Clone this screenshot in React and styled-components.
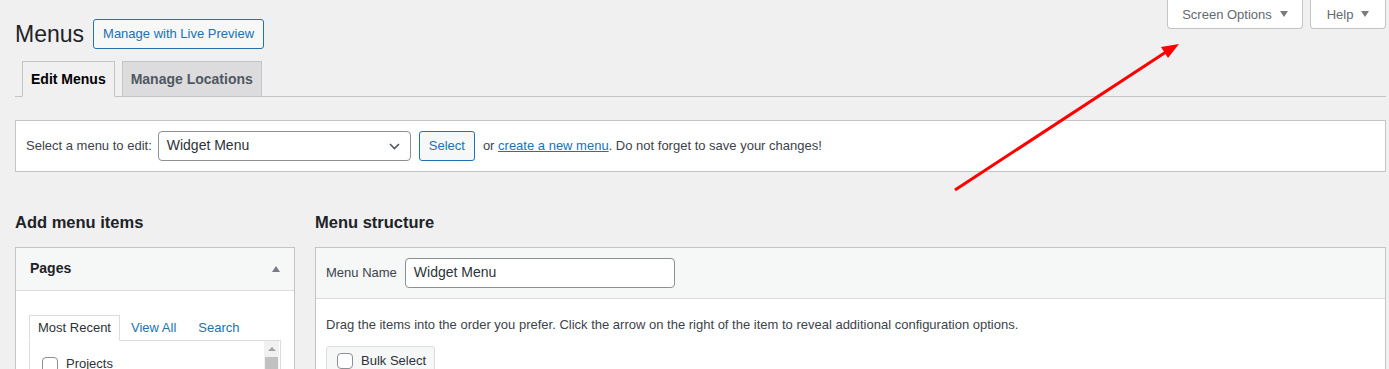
import React from 'react';
import styled, { createGlobalStyle } from 'styled-components';

const GlobalStyle = createGlobalStyle`
  html, body {
    margin: 0;
    padding: 0;
    background: #f0f0f1;
  }
  body {
    font-family: "Liberation Sans", Arial, sans-serif;
    font-size: 13px;
    line-height: 1.4;
    color: #3c434a;
  }
  * {
    box-sizing: border-box;
  }
`;

const Page = styled.div`
  position: relative;
  width: 1389px;
  height: 369px;
  overflow: hidden;
  padding: 0 3px 0 15px;
`;

const HeaderRow = styled.div`
  display: flex;
  justify-content: space-between;
  align-items: flex-start;
`;

const TitleGroup = styled.div`
  display: flex;
  align-items: center;
  gap: 9px;
  padding-top: 19px;
`;

const Title = styled.h1`
  margin: 0;
  font-size: 23px;
  font-weight: 400;
  line-height: 30px;
  color: #1d2327;
`;

const OutlineButton = styled.button`
  height: 30px;
  padding: 0 9px;
  border: 1px solid #2271b1;
  border-radius: 3px;
  background: #f6f7f7;
  color: #2271b1;
  font-family: inherit;
  font-size: 13px;
  line-height: 28px;
  white-space: nowrap;
  cursor: pointer;
`;

const MetaLinks = styled.div`
  display: flex;
  gap: 7px;
`;

const MetaTab = styled.button`
  display: flex;
  align-items: center;
  justify-content: center;
  gap: 8px;
  width: ${(p) => p.$width}px;
  height: 29px;
  padding: 0;
  border: 1px solid #c3c4c7;
  border-top: none;
  border-radius: 0 0 4px 4px;
  background: #fff;
  color: #646970;
  font-family: inherit;
  font-size: 13px;
  white-space: nowrap;
  cursor: pointer;
`;

const Caret = styled.span`
  width: 0;
  height: 0;
  border-left: 4px solid transparent;
  border-right: 4px solid transparent;
  border-top: ${(p) => (p.$up ? 'none' : '6px solid #787c82')};
  border-bottom: ${(p) => (p.$up ? '6px solid #787c82' : 'none')};
`;

const TabBar = styled.nav`
  display: flex;
  gap: 7px;
  margin-top: 12px;
  padding-left: 7px;
  border-bottom: 1px solid #c3c4c7;
`;

const NavTab = styled.a`
  display: block;
  height: 36px;
  margin-bottom: -1px;
  padding: 0 8px;
  border: 1px solid #c3c4c7;
  border-bottom-color: ${(p) => (p.$active ? '#f0f0f1' : '#c3c4c7')};
  background: ${(p) => (p.$active ? '#f0f0f1' : '#dcdcde')};
  color: ${(p) => (p.$active ? '#000' : '#50575e')};
  font-size: 14px;
  font-weight: 600;
  line-height: 34px;
  text-decoration: none;
  white-space: nowrap;
`;

const ManageBox = styled.div`
  display: flex;
  align-items: center;
  margin-top: 23px;
  padding: 10px;
  background: #fff;
  border: 1px solid #c3c4c7;
`;

const Label = styled.label`
  color: #3c434a;
  margin-right: ${(p) => p.$gap || 6}px;
  white-space: nowrap;
`;

const SelectBox = styled.div`
  display: flex;
  align-items: center;
  justify-content: space-between;
  width: 253px;
  height: 30px;
  padding: 0 10px 0 8px;
  border: 1px solid #8c8f94;
  border-radius: 4px;
  background: #fff;
  color: #2c3338;
  font-size: 14px;
  margin-right: 8px;
`;

const SecondaryButton = styled(OutlineButton)`
  margin-right: 8px;
`;

const Link = styled.a`
  color: #2271b1;
  text-decoration: underline;
`;

const Columns = styled.div`
  display: grid;
  grid-template-columns: 280px 1fr;
  column-gap: 20px;
`;

const SectionTitle = styled.h2`
  margin: 39px 0 14px;
  font-size: 16.5px;
  font-weight: 600;
  line-height: 22px;
  color: #1d2327;
`;

const Box = styled.div`
  background: #fff;
  border: 1px solid #c3c4c7;
`;

const BoxHeader = styled.div`
  display: flex;
  align-items: center;
  justify-content: space-between;
  height: ${(p) => p.$height}px;
  padding: 0 14px 0 ${(p) => p.$pl || 14}px;
  background: #f6f7f7;
  border-bottom: 1px solid #dcdcde;
`;

const BoxTitle = styled.h3`
  margin: 0;
  font-size: 14px;
  font-weight: 600;
  color: #1d2327;
`;

const BoxBody = styled.div`
  padding: ${(p) => p.$pad};
`;

const FieldRow = styled.div`
  display: flex;
  align-items: center;
`;

const InnerTabs = styled.ul`
  display: flex;
  align-items: flex-end;
  list-style: none;
  margin: 0;
  padding: 0;
`;

const InnerTab = styled.li`
  height: 26px;
  padding: 0 ${(p) => (p.$active ? 8 : 6)}px;
  margin-right: ${(p) => (p.$active ? 4 : 8)}px;
  margin-bottom: -1px;
  border: 1px solid ${(p) => (p.$active ? '#dcdcde' : 'transparent')};
  border-bottom-color: ${(p) => (p.$active ? '#fff' : 'transparent')};
  background: ${(p) => (p.$active ? '#fff' : 'transparent')};
  color: ${(p) => (p.$active ? '#2c3338' : '#2271b1')};
  line-height: 24px;
`;

const TabPanel = styled.div`
  display: flex;
  justify-content: space-between;
  height: 60px;
  border: 1px solid #dcdcde;
  background: #fff;
`;

const CheckRow = styled.label`
  display: flex;
  align-items: center;
  gap: 8px;
  height: 30px;
  padding: 17px 0 0 12px;
  color: #2c3338;
`;

const Checkbox = styled.span`
  display: inline-block;
  flex: none;
  width: 16px;
  height: 16px;
  border: 1px solid #8c8f94;
  border-radius: 4px;
  background: #fff;
`;

const Scrollbar = styled.div`
  display: flex;
  flex-direction: column;
  align-items: center;
  width: 15px;
  margin-right: 1px;
  background: #f1f1f1;
`;

const ScrollArrow = styled.span`
  margin: 6px 0;
  width: 0;
  height: 0;
  border-left: 4px solid transparent;
  border-right: 4px solid transparent;
  border-bottom: 4px solid #a3a3a3;
`;

const ScrollThumb = styled.div`
  width: 13px;
  height: 40px;
  background: #c1c1c1;
`;

const TextInput = styled.div`
  display: flex;
  align-items: center;
  width: 270px;
  height: 30px;
  padding: 0 8px;
  border: 1px solid #8c8f94;
  border-radius: 4px;
  background: #fff;
  color: #2c3338;
  font-size: 14px;
`;

const Hint = styled.p`
  margin: 0 0 11px;
  line-height: 20px;
  color: #3c434a;
`;

const BulkButton = styled.div`
  display: inline-flex;
  align-items: center;
  gap: 8px;
  height: 30px;
  padding: 0 8px 0 10px;
  border: 1px solid #dcdcde;
  border-radius: 3px;
  background: #f6f7f7;
  color: #2c3338;
`;

const ArrowOverlay = styled.svg`
  position: absolute;
  left: 0;
  top: 0;
  pointer-events: none;
`;

function ChevronDown() {
  return (
    <svg width="11" height="7" viewBox="0 0 11 7" fill="none">
      <path d="M1 1l4.5 4.5L10 1" stroke="#50575e" strokeWidth="1.6" />
    </svg>
  );
}

export default function App() {
  return (
    <>
      <GlobalStyle />
      <Page>
        <HeaderRow>
          <TitleGroup>
            <Title>Menus</Title>
            <OutlineButton>Manage with Live Preview</OutlineButton>
          </TitleGroup>
          <MetaLinks>
            <MetaTab $width={136}>
              Screen Options <Caret />
            </MetaTab>
            <MetaTab $width={76}>
              Help <Caret />
            </MetaTab>
          </MetaLinks>
        </HeaderRow>

        <TabBar>
          <NavTab $active>Edit Menus</NavTab>
          <NavTab>Manage Locations</NavTab>
        </TabBar>

        <ManageBox>
          <Label $gap={6}>Select a menu to edit:</Label>
          <SelectBox>
            Widget Menu
            <ChevronDown />
          </SelectBox>
          <SecondaryButton>Select</SecondaryButton>
          <span>
            or <Link>create a new menu</Link>. Do not forget to save your changes!
          </span>
        </ManageBox>

        <Columns>
          <div>
            <SectionTitle>Add menu items</SectionTitle>
            <Box>
              <BoxHeader $height={43}>
                <BoxTitle>Pages</BoxTitle>
                <Caret $up />
              </BoxHeader>
              <BoxBody $pad="24px 13px 0">
                <InnerTabs>
                  <InnerTab $active>Most Recent</InnerTab>
                  <InnerTab>View All</InnerTab>
                  <InnerTab>Search</InnerTab>
                </InnerTabs>
                <TabPanel>
                  <CheckRow>
                    <Checkbox />
                    Projects
                  </CheckRow>
                  <Scrollbar>
                    <ScrollArrow />
                    <ScrollThumb />
                  </Scrollbar>
                </TabPanel>
              </BoxBody>
            </Box>
          </div>

          <div>
            <SectionTitle>Menu structure</SectionTitle>
            <Box>
              <BoxHeader $height={51} $pl={10}>
                <FieldRow>
                  <Label $gap={8}>Menu Name</Label>
                  <TextInput>Widget Menu</TextInput>
                </FieldRow>
              </BoxHeader>
              <BoxBody $pad="16px 10px 20px">
                <Hint>
                  Drag the items into the order you prefer. Click the arrow on the right of the item to reveal
                  additional configuration options.
                </Hint>
                <BulkButton>
                  <Checkbox />
                  Bulk Select
                </BulkButton>
              </BoxBody>
            </Box>
          </div>
        </Columns>

        <ArrowOverlay width="1389" height="369" viewBox="0 0 1389 369">
          <line x1="955" y1="190" x2="1166" y2="52" stroke="#ff0000" strokeWidth="3" />
          <polygon points="1179,44 1161,47 1168,58" fill="#ff0000" />
        </ArrowOverlay>
      </Page>
    </>
  );
}
